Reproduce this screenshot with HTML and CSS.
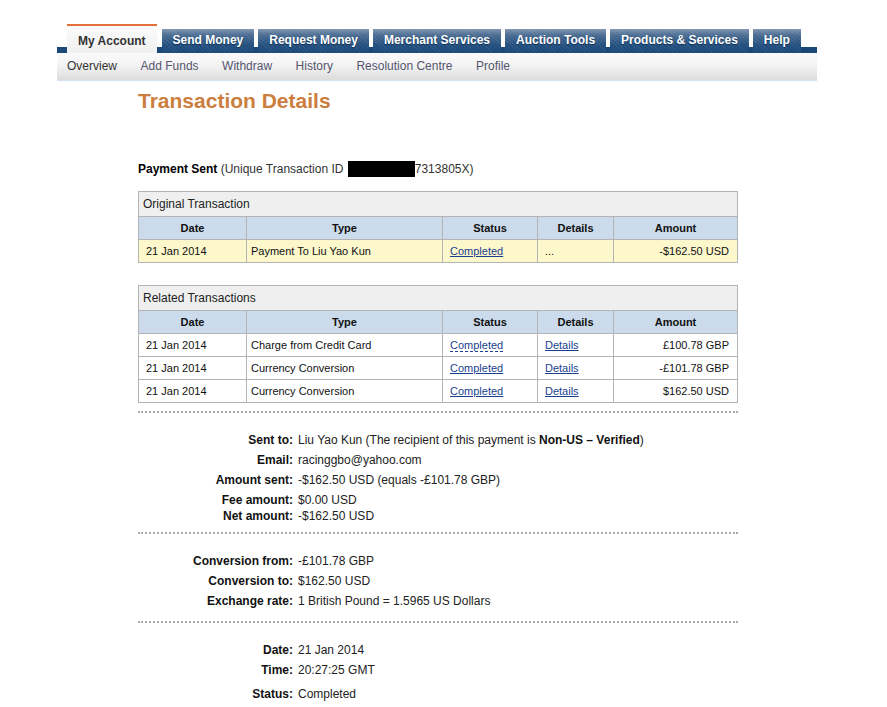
FILE: index.html
```html
<!DOCTYPE html>
<html lang="en">
<head>
    <meta charset="UTF-8">
    <title>Transaction Details</title>
    <link rel="stylesheet" href="styles.css">
</head>
<body>
    <div id="page">
        <div id="tabbar">
            <a class="tab tab-active" href="#">My Account</a>
            <a class="tab" href="#">Send Money</a>
            <a class="tab" href="#">Request Money</a>
            <a class="tab" href="#">Merchant Services</a>
            <a class="tab" href="#">Auction Tools</a>
            <a class="tab" href="#">Products &amp; Services</a>
            <a class="tab" href="#">Help</a>
        </div>
        <div id="subnav">
            <a class="sub sub-active" href="#">Overview</a>
            <a class="sub" href="#">Add Funds</a>
            <a class="sub" href="#">Withdraw</a>
            <a class="sub" href="#">History</a>
            <a class="sub" href="#">Resolution Centre</a>
            <a class="sub" href="#">Profile</a>
        </div>

        <div id="main">
            <h1>Transaction Details</h1>

            <p class="payment-line"><b>Payment Sent</b> (Unique Transaction ID <span class="hidden-id"></span>7313805X)</p>

            <table class="txn">
                <tr><th class="caption" colspan="5">Original Transaction</th></tr>
                <tr class="head">
                    <th class="c-date">Date</th>
                    <th class="c-type">Type</th>
                    <th class="c-status">Status</th>
                    <th class="c-details">Details</th>
                    <th class="c-amount">Amount</th>
                </tr>
                <tr class="hilite">
                    <td>21 Jan 2014</td>
                    <td class="type">Payment To Liu Yao Kun</td>
                    <td><a href="#">Completed</a></td>
                    <td>...</td>
                    <td class="amt">-$162.50 USD</td>
                </tr>
            </table>

            <table class="txn">
                <tr><th class="caption" colspan="5">Related Transactions</th></tr>
                <tr class="head">
                    <th class="c-date">Date</th>
                    <th class="c-type">Type</th>
                    <th class="c-status">Status</th>
                    <th class="c-details">Details</th>
                    <th class="c-amount">Amount</th>
                </tr>
                <tr>
                    <td>21 Jan 2014</td>
                    <td class="type">Charge from Credit Card</td>
                    <td><a class="dotted" href="#">Completed</a></td>
                    <td><a href="#">Details</a></td>
                    <td class="amt">£100.78 GBP</td>
                </tr>
                <tr>
                    <td>21 Jan 2014</td>
                    <td class="type">Currency Conversion</td>
                    <td><a href="#">Completed</a></td>
                    <td><a href="#">Details</a></td>
                    <td class="amt">-£101.78 GBP</td>
                </tr>
                <tr>
                    <td>21 Jan 2014</td>
                    <td class="type">Currency Conversion</td>
                    <td><a href="#">Completed</a></td>
                    <td><a href="#">Details</a></td>
                    <td class="amt">$162.50 USD</td>
                </tr>
            </table>

            <div class="sep"></div>

            <dl class="info">
                <dt>Sent to:</dt><dd>Liu Yao Kun (The recipient of this payment is <b>Non-US – Verified</b>)</dd>
                <dt>Email:</dt><dd>racinggbo@yahoo.com</dd>
                <dt>Amount sent:</dt><dd>-$162.50 USD (equals -£101.78 GBP)</dd>
                <dt>Fee amount:</dt><dd>$0.00 USD</dd>
                <dt class="tight">Net amount:</dt><dd class="tight">-$162.50 USD</dd>
            </dl>

            <div class="sep"></div>

            <dl class="info">
                <dt>Conversion from:</dt><dd>-£101.78 GBP</dd>
                <dt>Conversion to:</dt><dd>$162.50 USD</dd>
                <dt>Exchange rate:</dt><dd>1 British Pound = 1.5965 US Dollars</dd>
            </dl>

            <div class="sep"></div>

            <dl class="info">
                <dt>Date:</dt><dd>21 Jan 2014</dd>
                <dt>Time:</dt><dd>20:27:25 GMT</dd>
                <dt class="tall">Status:</dt><dd class="tall">Completed</dd>
            </dl>
        </div>
    </div>
</body>
</html>
```
FILE: styles.css
```css
body {
    margin: 0;
    font-family: "Liberation Sans", Arial, sans-serif;
    font-size: 12px;
    color: #222;
    background-color: #fff;
}

#page {
    width: 760px;
    margin-left: 57px;
    padding-top: 24px;
}

/* top tabs */
#tabbar {
    display: flex;
    align-items: flex-end;
    height: 29px;
    padding-left: 10px;
    background: linear-gradient(to top, #1b4878 6px, transparent 6px);
}

.tab {
    height: 24px;
    margin-right: 4px;
    padding: 3px 11px 0;
    box-sizing: border-box;
    font-weight: bold;
    font-size: 12px;
    line-height: 16px;
    color: #fff;
    text-decoration: none;
    text-shadow: 0 1px 1px #0f2f55;
    background:
        repeating-linear-gradient(45deg, rgba(255, 255, 255, 0.06) 0 1px, transparent 1px 3px),
        linear-gradient(to bottom, #8196b0 0, #4c6d93 6px, #23507f 16px, #1b4878 100%);
}

.tab-active {
    height: 29px;
    margin-right: 5px;
    padding-top: 7px;
    border-top: 2px solid #e6703a;
    color: #333;
    text-shadow: none;
    background: linear-gradient(to bottom, #fbfbfb, #f0f0f0);
}

/* sub menu */
#subnav {
    display: flex;
    height: 27px;
    padding-left: 10px;
    align-items: center;
    background: linear-gradient(to bottom, #fbfbfb 0, #f2f2f2 50%, #dcdcdc 100%);
    border-bottom: 1px solid #d6e2ef;
}

.sub {
    margin-right: 23.5px;
    font-size: 12px;
    color: #55556e;
    text-decoration: none;
    padding-bottom: 2px;
}

.sub-active {
    color: #333;
}

#main {
    padding-left: 81px;
}

h1 {
    margin: 8px 0 0;
    font-size: 21px;
    line-height: 24px;
    color: #cc7e3e;
}

.payment-line {
    margin: 47px 0 0;
    line-height: 18px;
    color: #333;
}

.payment-line b {
    color: #000;
}

.hidden-id {
    display: inline-block;
    width: 67px;
    height: 16px;
    margin-left: 1px;
    background: #000;
    vertical-align: -4px;
}

/* transaction tables */
.txn {
    width: 600px;
    border-collapse: collapse;
    border: 1px solid #a8a8a8;
    margin-top: 13px;
    font-size: 11px;
    color: #111;
}

.txn + .txn {
    margin-top: 22px;
}

.txn th,
.txn td {
    border: 1px solid #b4b4b4;
    padding: 0 7px;
}

.txn .caption {
    height: 24px;
    text-align: left;
    font-weight: normal;
    font-size: 12px;
    color: #222;
    background: #efefef;
    padding-left: 4px;
}

.head th {
    height: 22px;
    background: #cbdbeb;
    font-weight: bold;
    color: #111;
}

.txn td {
    height: 22px;
}

.txn td.type {
    padding-left: 4px;
}

.hilite td {
    background: #fdf7cc;
}

.c-date { width: 93px; }
.c-type { width: 181px; }
.c-status { width: 80px; }
.c-details { width: 61px; }

.amt {
    text-align: right;
}

.txn td:last-child {
    padding-right: 8px;
}

.txn a {
    color: #1a3f8f;
}

.txn a.dotted {
    text-decoration: none;
    border-bottom: 1px dashed #1a3f8f;
}

.sep {
    width: 600px;
    height: 0;
    border-top: 2px dotted #aaa;
    margin-top: 8px;
}

.info {
    display: grid;
    grid-template-columns: 155px 1fr;
    column-gap: 5px;
    margin: 17px 0 10px;
    line-height: 20px;
}

.info dt {
    text-align: right;
    font-weight: bold;
    color: #111;
}

.info dd {
    margin: 0;
    color: #222;
}

.info dd b {
    color: #111;
}

.info .tight {
    line-height: 12px;
}

.info .tall {
    line-height: 20px;
    margin-top: 4px;
}
```
